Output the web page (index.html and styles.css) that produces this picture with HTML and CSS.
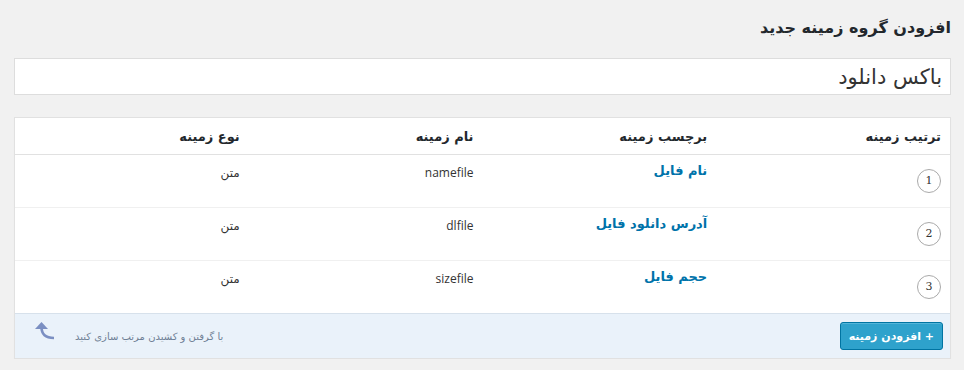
FILE: index.html
```html
<!doctype html>
<html lang="fa" dir="rtl">
<head>
    <meta charset="utf-8">
    <title>افزودن گروه زمینه جدید</title>
    <link rel="stylesheet" href="styles.css">
</head>
<body>

<main class="wrap">
    <h1 class="page-title">افزودن گروه زمینه جدید</h1>

    <div class="title-box">
        <input class="title-input" type="text" value="باکس دانلود">
    </div>

    <div class="fields-panel">
        <table class="fields-table">
            <thead>
                <tr>
                    <th>ترتیب زمینه</th>
                    <th>برچسب زمینه</th>
                    <th>نام زمینه</th>
                    <th>نوع زمینه</th>
                </tr>
            </thead>
            <tbody>
                <tr>
                    <td><span class="order">1</span></td>
                    <td><a class="field-label" href="#">نام فایل</a></td>
                    <td class="field-name">namefile</td>
                    <td class="field-type">متن</td>
                </tr>
                <tr>
                    <td><span class="order">2</span></td>
                    <td><a class="field-label" href="#">آدرس دانلود فایل</a></td>
                    <td class="field-name">dlfile</td>
                    <td class="field-type">متن</td>
                </tr>
                <tr>
                    <td><span class="order">3</span></td>
                    <td><a class="field-label" href="#">حجم فایل</a></td>
                    <td class="field-name">sizefile</td>
                    <td class="field-type">متن</td>
                </tr>
            </tbody>
        </table>

        <div class="panel-footer">
            <button class="add-button">+ افزودن زمینه</button>
            <div class="sort-hint">
                <span>با گرفتن و کشیدن مرتب سازی کنید</span>
                <svg class="sort-icon" width="22" height="20" viewBox="0 0 22 20">
                    <polygon points="2,8 8.5,1 15,8" fill="#7b8fc2"/>
                    <path d="M8.5 6 Q8.5 17 21 17" fill="none" stroke="#7b8fc2" stroke-width="2.6"/>
                </svg>
            </div>
        </div>
    </div>
</main>

</body>
</html>
```

FILE: styles.css
```css
body {
    margin: 0;
    background-color: #f1f1f1;
    font-family: Tahoma, "DejaVu Sans", sans-serif;
    color: #222222;
}

.wrap {
    padding: 18px 13px 0 14px;
}

.page-title {
    margin: 0 0 20px 0;
    font-size: 16px;
    font-weight: bold;
    line-height: 20px;
    color: #23282d;
}

.title-box {
    background-color: #ffffff;
    border: 1px solid #dddddd;
    height: 35px;
}

.title-input {
    width: 100%;
    height: 35px;
    box-sizing: border-box;
    border: none;
    background: transparent;
    padding: 0 8px;
    font-family: "DejaVu Sans", sans-serif;
    font-size: 21px;
    color: #333333;
    outline: none;
}

.fields-panel {
    margin-top: 22px;
    background-color: #ffffff;
    border: 1px solid #e1e1e1;
    box-shadow: 0 1px 1px rgba(0, 0, 0, 0.04);
}

.fields-table {
    width: 100%;
    border-collapse: collapse;
    table-layout: fixed;
}

.fields-table th {
    height: 36px;
    padding: 0 9px;
    text-align: right;
    font-size: 13px;
    font-weight: bold;
    color: #23282d;
    border-bottom: 1px solid #e1e1e1;
}

.fields-table td {
    height: 52px;
    padding: 0 9px;
    text-align: right;
    vertical-align: top;
    border-bottom: 1px solid #f0f0f0;
    font-size: 12px;
}

.fields-table tr:last-child td {
    border-bottom: none;
}

.order {
    display: inline-block;
    width: 22px;
    height: 22px;
    margin-top: 14px;
    border: 1px solid #aaaaaa;
    border-radius: 50%;
    text-align: center;
    line-height: 22px;
    font-family: "DejaVu Serif", serif;
    font-size: 11px;
    color: #333333;
}

.field-label {
    display: inline-block;
    margin-top: 8px;
    font-size: 13px;
    font-weight: bold;
    color: #0073aa;
    text-decoration: none;
}

.field-name {
    font-family: "Open Sans", sans-serif;
    color: #333333;
}

.field-name,
.field-type {
    line-height: 36px;
}

.field-type {
    font-size: 11px;
    color: #333333;
}

.panel-footer {
    display: flex;
    align-items: center;
    justify-content: space-between;
    height: 44px;
    padding: 0 7px 0 18px;
    background-color: #eaf2fa;
    border-top: 1px solid #d7e1eb;
}

.add-button {
    height: 28px;
    padding: 0 8px;
    border: 1px solid #0074a2;
    border-radius: 3px;
    background-color: #2ea2cc;
    color: #ffffff;
    font-family: Tahoma, "DejaVu Sans", sans-serif;
    font-size: 11px;
    font-weight: bold;
    box-shadow: inset 0 1px 0 rgba(120, 200, 230, 0.5);
}

.sort-hint {
    display: flex;
    align-items: center;
    gap: 20px;
    font-size: 10px;
    color: #6f7f95;
}

.sort-icon {
    margin-top: -10px;
}
```
